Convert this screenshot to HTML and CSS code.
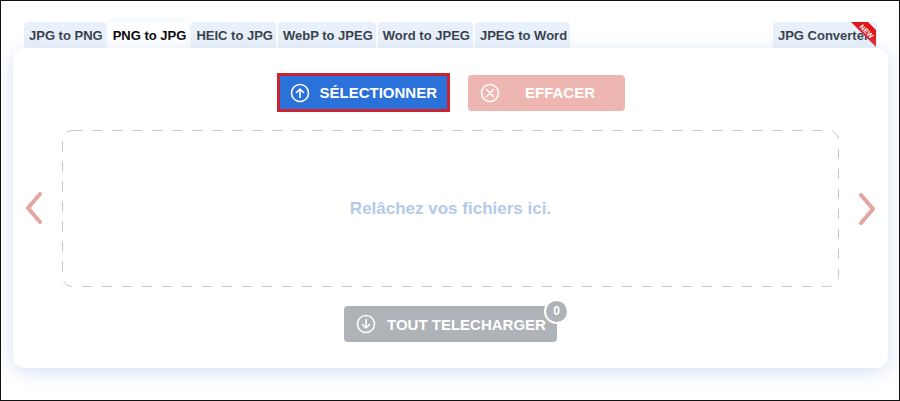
FILE: index.html
```html
<!DOCTYPE html>
<html lang="fr">
<head>
<meta charset="utf-8">
<title>PNG to JPG</title>
<link rel="stylesheet" href="styles.css">
</head>
<body>
<main class="frame">
  <nav class="tabs">
    <a class="tab" href="#">JPG to PNG</a>
    <a class="tab active" href="#">PNG to JPG</a>
    <a class="tab" href="#">HEIC to JPG</a>
    <a class="tab" href="#">WebP to JPEG</a>
    <a class="tab" href="#">Word to JPEG</a>
    <a class="tab" href="#">JPEG to Word</a>
    <a class="tab last" href="#">JPG Converter
      <svg class="ribbon" viewBox="0 0 26 26" aria-hidden="true">
        <path d="M0 0H17L25 8V25Z" fill="#e0161b"/>
        <text x="16" y="12" transform="rotate(45 16 9)" text-anchor="middle" class="ribbon-text">NEW</text>
      </svg>
    </a>
  </nav>
  <section class="card">
    <div class="row">
      <button class="btn select" type="button">
        <svg class="icon" viewBox="0 0 20 20"><circle cx="10" cy="10" r="8.5"/><path d="M10 14.5V6M6.5 9.5L10 6l3.5 3.5"/></svg>
        <span class="label">SÉLECTIONNER</span>
      </button>
      <button class="btn clear" type="button">
        <svg class="icon" viewBox="0 0 20 20"><circle cx="10" cy="10" r="8.5"/><path d="M6.5 6.5l7 7M13.5 6.5l-7 7"/></svg>
        <span class="label">EFFACER</span>
      </button>
    </div>
    <div class="middle">
      <button class="arrow" type="button" aria-label="Précédent">
        <svg viewBox="0 0 20 36"><path d="M17 3L5 17l12 14"/></svg>
      </button>
      <div class="drop">
        <svg class="outline" aria-hidden="true"><rect x="0.5" y="0.5" width="100%" height="100%" rx="10"/></svg>
        <span>Relâchez vos fichiers ici.</span>
      </div>
      <button class="arrow" type="button" aria-label="Suivant">
        <svg viewBox="0 0 20 36"><path d="M4 4l12 14L4 32"/></svg>
      </button>
    </div>
    <div class="row">
      <button class="btn download" type="button">
        <svg class="icon" viewBox="0 0 20 20"><circle cx="10" cy="10" r="8.5"/><path d="M10 5.5V14M6.5 10.5L10 14l3.5-3.5"/></svg>
        <span class="label">TOUT TELECHARGER</span>
        <span class="badge">0</span>
      </button>
    </div>
  </section>
</main>
</body>
</html>
```
FILE: styles.css
```css
* {
  box-sizing: border-box;
}

body {
  margin: 0;
  background: #fff;
  font-family: "Liberation Sans", Arial, sans-serif;
  font-weight: bold;
}

.frame {
  min-height: 100vh;
  padding: 21px 11px 31px 12px;
  border: 1px solid #111;
  overflow: hidden;
}

.tabs {
  display: flex;
  gap: 2px;
  padding: 0 11px;
}

.tab {
  position: relative;
  height: 26px;
  padding: 0 3px 0 5px;
  border-radius: 4px 4px 0 0;
  background: #e8f0f9;
  color: #333b48;
  font-size: 13px;
  line-height: 28px;
  text-decoration: none;
  white-space: nowrap;
}

.active {
  background: #fff;
  color: #000;
  box-shadow: 0 -2px 10px #edf3fa;
}

.last {
  margin-left: auto;
  padding-right: 8px;
}

.ribbon {
  position: absolute;
  top: 0;
  right: 0;
  width: 26px;
  height: 26px;
}

.ribbon-text {
  fill: #fff;
  font-size: 7px;
}

.card {
  position: relative;
  padding: 25px 10px 26px;
  border-radius: 12px;
  background: #fff;
  box-shadow: 0 4px 20px #d5e1f4;
}

.row {
  display: flex;
  justify-content: center;
  align-items: center;
  gap: 18px;
}

.btn {
  position: relative;
  display: flex;
  align-items: center;
  height: 36px;
  padding: 0 14px 0 12px;
  border: 0;
  border-radius: 4px;
  color: #fff;
  font: bold 15px "Liberation Sans", Arial, sans-serif;
}

.label {
  flex: 1;
  text-align: center;
  white-space: nowrap;
}

.icon {
  flex: none;
  width: 20px;
  height: 20px;
  margin-right: 10px;
  fill: none;
  stroke: #fff;
  stroke-width: 1.6;
  stroke-linecap: round;
  stroke-linejoin: round;
}

.select {
  width: 173px;
  height: 39px;
  padding: 0 12px 0 10px;
  border: 3px solid #cb2431;
  border-radius: 0;
  background: #2a71d9;
}

.clear {
  width: 157px;
  background: #eeb6b1;
}

.middle {
  display: flex;
  align-items: center;
  gap: 18px;
  margin: 18px 0 19px;
}

.arrow {
  width: 21px;
  height: 36px;
  padding: 0;
  border: 0;
  background: none;
}

.arrow svg {
  display: block;
  width: 20px;
  height: 36px;
  fill: none;
  stroke: #e3a5a0;
  stroke-width: 4;
  stroke-linecap: round;
  stroke-linejoin: round;
}

.drop {
  position: relative;
  display: flex;
  flex: 1;
  align-items: center;
  justify-content: center;
  height: 157px;
  color: #b4cae8;
  font-size: 17px;
}

.outline {
  position: absolute;
  top: 0;
  left: 0;
  width: calc(100% - 1px);
  height: calc(100% - 1px);
  overflow: visible;
  fill: none;
  stroke: #c0c8d6;
  stroke-dasharray: 10 10;
}

.download {
  width: 213px;
  padding-right: 10px;
  background: #afb2b7;
}

.badge {
  position: absolute;
  top: -7px;
  right: -12px;
  width: 25px;
  height: 25px;
  border: 2px solid #fff;
  border-radius: 50%;
  background: #afb2b7;
  font-size: 12px;
  line-height: 21px;
  text-align: center;
}
```
